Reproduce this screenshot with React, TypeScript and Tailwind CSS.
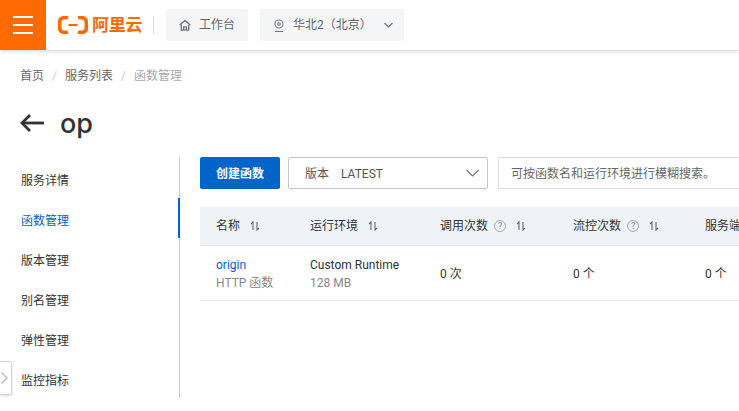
import React from "react";

const Sort = () => (
  <svg width="10" height="10" viewBox="0 0 10 10" fill="none" stroke="#666" strokeWidth="1.1" className="shrink-0">
    <path d="M3 9V1L1 3" />
    <path d="M7 1v8l2-2" />
  </svg>
);

const Help = () => (
  <span className="inline-flex w-[12px] h-[12px] rounded-full border border-[#aaa] text-[9px] leading-none items-center justify-center text-[#888] shrink-0">?</span>
);

const Th = ({ label, help, w }: { label: string; help?: boolean; w: string }) => (
  <div className={`${w} shrink-0 pl-4 flex items-center`}>
    <span className="whitespace-nowrap">{label}</span>
    {help && <span className="ml-[6px] flex"><Help /></span>}
    <span className={`${help ? "ml-[10px]" : "ml-[10px]"} flex`}><Sort /></span>
  </div>
);

const nav = ["服务详情", "函数管理", "版本管理", "别名管理", "弹性管理", "监控指标"];

export default function App() {
  return (
    <div className="relative w-[739px] h-[411px] overflow-hidden bg-white text-[12px] text-[#333] font-['Roboto','Noto_Sans_CJK_SC',sans-serif]">
      <header className="h-[50px] flex items-center bg-white shadow-[0_1px_4px_rgba(0,0,0,0.2)]">
        <div className="w-[46px] h-[50px] bg-[#ff6a00] flex flex-col items-center justify-center gap-[6px]">
          <span className="w-5 h-[2px] bg-white" />
          <span className="w-5 h-[2px] bg-white" />
          <span className="w-5 h-[2px] bg-white" />
        </div>
        <div className="ml-[12px] flex items-center text-[#ff6a00]">
          <svg width="30" height="18" viewBox="0 0 30 18" fill="#ff6a00">
            <path d="M10.500 0H6C2 0 0 2.500 0 5.500v7C0 15.500 2 18 6 18h4.500l-1-3.500H6c-1.500 0-2.500-1-2.500-2.500V6c0-1.500 1-2.500 2.500-2.500h3.500z" />
            <path d="M19.500 0H24c4 0 6 2.500 6 5.500v7c0 3-2 5.500-6 5.500h-4.500l1-3.500H24c1.500 0 2.500-1 2.500-2.500V6c0-1.500-1-2.500-2.500-2.500h-3.500z" />
            <rect x="10.500" y="8" width="9" height="2" />
          </svg>
          <span className="ml-[4px] w-[49px] text-[17px] tracking-[-0.3px] leading-none font-bold whitespace-nowrap">阿里云</span>
        </div>
        <div className="ml-[12px] w-px h-[18px] bg-[#ddd]" />
        <div className="ml-[12px] w-[82px] h-8 rounded-[2px] bg-[#f4f5f7] flex items-center pl-[13px] text-[#666]">
          <svg width="12" height="12" viewBox="0 0 13 13" fill="none" stroke="#777" strokeWidth="1.5">
            <path d="M.8 6.500 6.500 1.500l5.700 5" />
            <path d="M2.500 6v6h8V6" />
            <path d="M5 12V8.500h3V12" />
          </svg>
          <span className="ml-2">工作台</span>
        </div>
        <div className="ml-3 w-[144px] h-8 rounded-[2px] bg-[#f4f5f7] flex items-center pl-[14px] text-[#666]">
          <svg width="10" height="13" viewBox="0 0 10 13" fill="none" stroke="#777" strokeWidth="1.1">
            <circle cx="5" cy="5" r="4" />
            <circle cx="5" cy="5" r="1.300" />
            <path d="M1 12.500h8" />
          </svg>
          <span className="ml-[9px] whitespace-nowrap">华北2（北京）</span>
          <svg className="ml-[12px]" width="9" height="6" viewBox="0 0 9 6" fill="none" stroke="#777" strokeWidth="1.2">
            <path d="M.5 1 4.500 5l4-4" />
          </svg>
        </div>
      </header>

      <nav className="mt-[18px] ml-5 h-4 flex items-center text-[#666] leading-none">
        <span>首页</span>
        <span className="mx-[8px] text-[#ccc]">/</span>
        <span>服务列表</span>
        <span className="mx-[8px] text-[#ccc]">/</span>
        <span className="text-[#aaa]">函数管理</span>
      </nav>

      <div className="mt-[23px] ml-5 h-[32px] flex items-center">
        <svg width="24" height="20" viewBox="0 0 24 20" fill="none" stroke="#333" strokeWidth="2.8">
          <path d="M24 10H2" />
          <path d="M10 2 2 10l8 8" />
        </svg>
        <span className="ml-[16px] text-[27px] font-medium leading-none text-[#333] font-['Inter',sans-serif]">op</span>
      </div>

      <div className="mt-[18px] flex">
        <aside className="relative w-[180px] h-[241px] shrink-0 border-r border-[#ccc]">
          <ul>
            {nav.map((n, i) => (
              <li key={n} className={`h-10 pl-[21px] pt-[5px] flex items-center relative first:mt-[1px] ${i === 1 ? "text-[#0064c8]" : "text-[#333]"}`}>
                {n}
                {i === 1 && <span className="absolute right-[-1px] top-0 w-[2px] h-10 bg-[#0064c8]" />}
              </li>
            ))}
          </ul>
        </aside>

        <main className="ml-5 flex-1 min-w-0">
          <div className="flex">
            <button className="w-[80px] h-8 pt-[1px] bg-[#0064c8] text-white font-bold rounded-[2px]">创建函数</button>
            <div className="ml-2 w-[200px] h-8 border border-[#c4c6cf] rounded-[2px] flex items-center pl-4 pr-[8px] text-[#555]">
              <span className="pt-[1px]">版本</span>
              <span className="ml-3 flex-1 pt-[1px]">LATEST</span>
              <svg width="13" height="8" viewBox="0 0 13 8" fill="none" stroke="#777" strokeWidth="1.1">
                <path d="M.5 1 6.500 7l6-6" />
              </svg>
            </div>
            <div className="ml-[10px] flex-1 h-8 pt-[1px] border border-[#dcdee3] border-r-0 rounded-l-[2px] flex items-center pl-3 text-[#666] whitespace-nowrap">
              可按函数名和运行环境进行模糊搜索。
            </div>
          </div>

          <div className="mt-[18px] h-[39px] bg-[#eff3f8] border-b border-[#e3e6eb] flex items-center text-[#333] overflow-hidden">
            <Th label="名称" w="w-[94px]" />
            <Th label="运行环境" w="w-[130px]" />
            <Th label="调用次数" help w="w-[133px]" />
            <Th label="流控次数" help w="w-[132px]" />
            <Th label="服务端" w="w-[132px]" />
          </div>
          <div className="h-[55px] pt-[2px] border-b border-[#e3e6eb] flex items-center text-[#333] overflow-hidden">
            <div className="w-[94px] shrink-0 pl-4 leading-[18px]">
              <div className="text-[#0064c8]">origin</div>
              <div className="text-[#888] whitespace-nowrap">HTTP 函数</div>
            </div>
            <div className="w-[130px] shrink-0 pl-4 leading-[18px]">
              <div className="whitespace-nowrap">Custom Runtime</div>
              <div className="text-[#888]">128 MB</div>
            </div>
            <div className="w-[133px] shrink-0 pl-4">0 次</div>
            <div className="w-[132px] shrink-0 pl-4">0 个</div>
            <div className="w-[132px] shrink-0 pl-4">0 个</div>
          </div>
        </main>
      </div>

      <div className="absolute left-0 top-[361px] w-[12px] h-[34px] bg-white border border-l-0 border-[#d5d5d5] rounded-r-[2px] shadow-[0_1px_3px_rgba(0,0,0,0.15)] flex items-center pl-[1px]">
        <svg width="7" height="12" viewBox="0 0 7 12" fill="none" stroke="#bbb" strokeWidth="1.4">
          <path d="M.5.5 6 6 .5 11.500" />
        </svg>
      </div>
    </div>
  );
}
